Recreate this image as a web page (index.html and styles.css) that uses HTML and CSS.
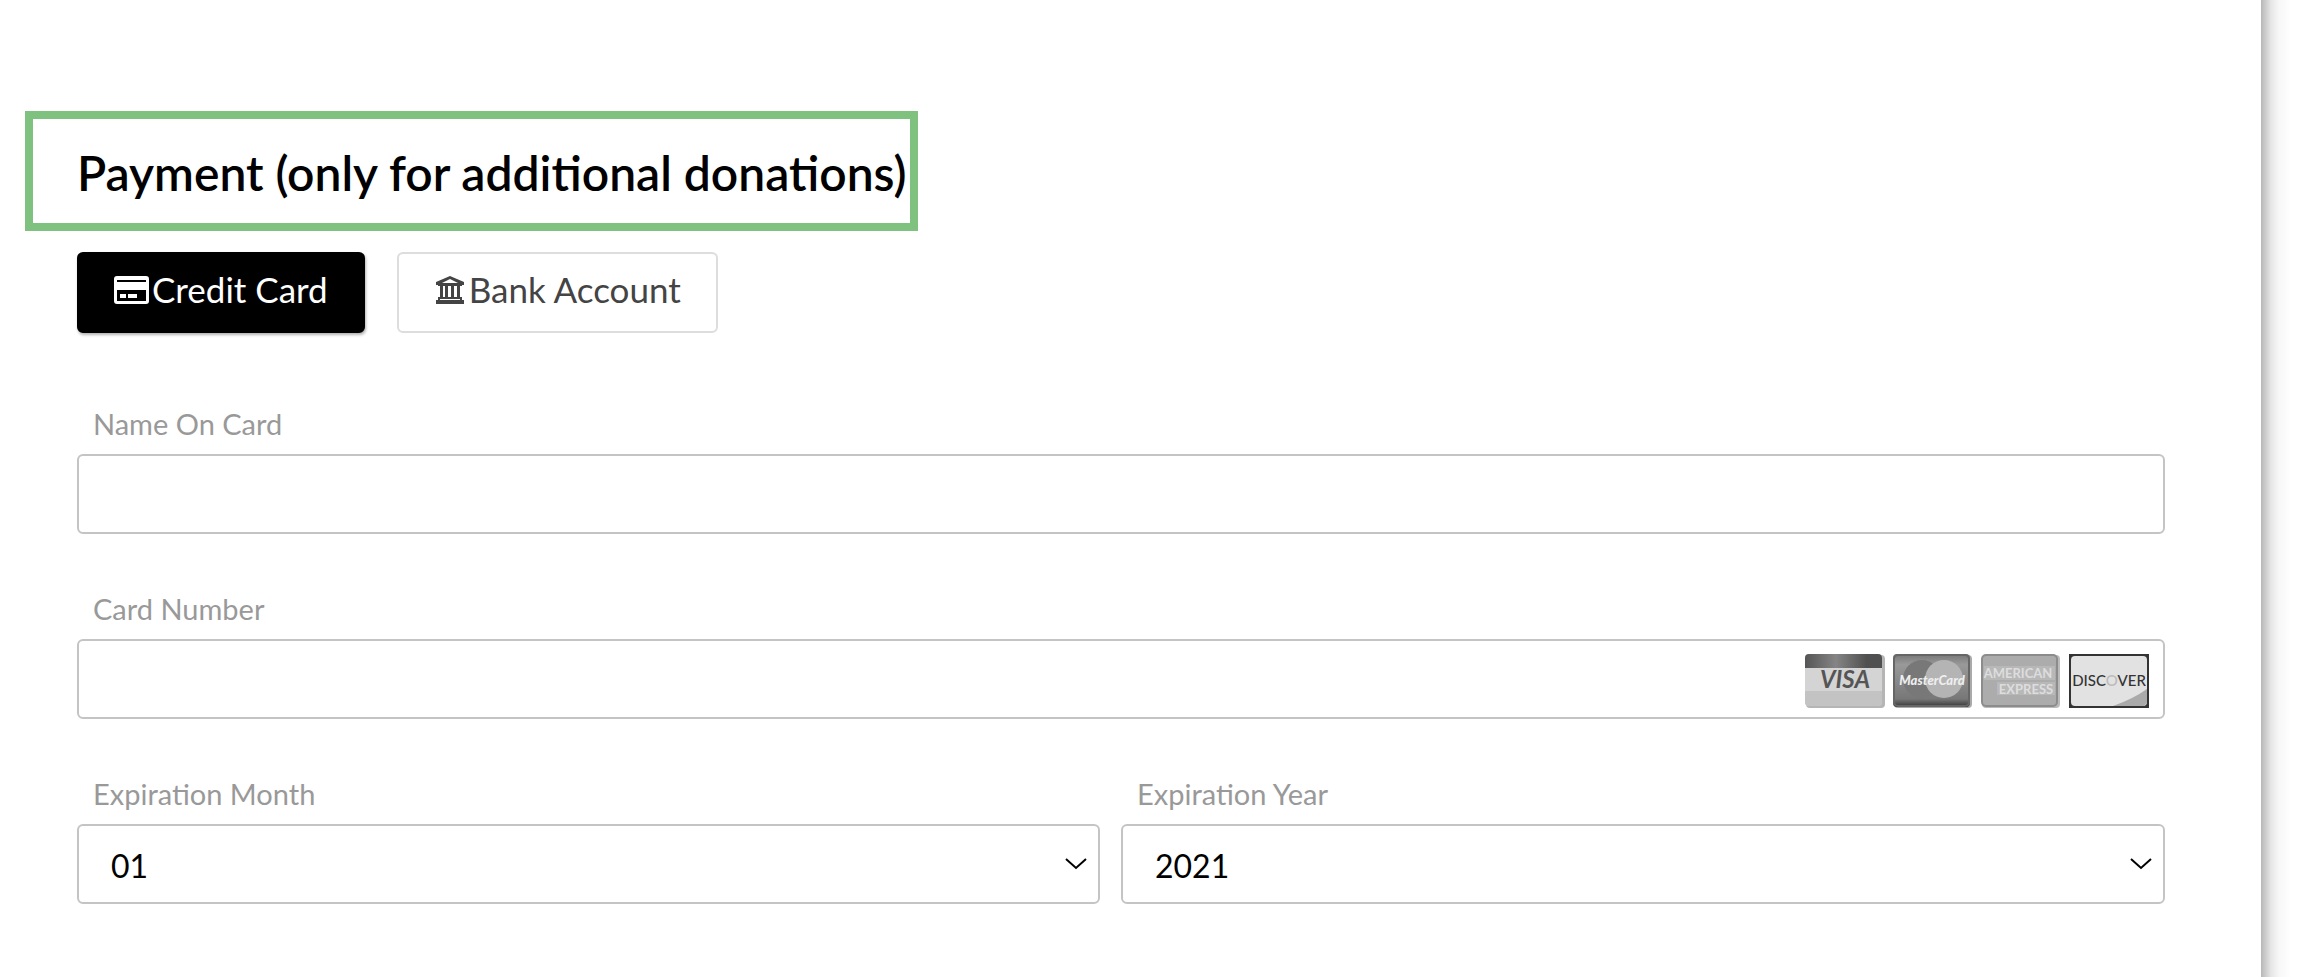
FILE: index.html
```
<!DOCTYPE html>
<html lang="en">
<head>
    <meta charset="UTF-8">
    <meta name="viewport" content="width=device-width, initial-scale=1.0">
    <title>Payment</title>
    <link rel="stylesheet" href="styles.css">
</head>
<body>
    <main class="page">
        <h2 class="title">Payment (only for additional donations)</h2>
        <form class="payment">
            <div class="methods">
                <button type="button" class="method active">
                    <svg class="card-icon" viewBox="0 0 35 28" aria-hidden="true">
                        <path fill-rule="evenodd" d="M3 0h29a3 3 0 0 1 3 3v22a3 3 0 0 1-3 3H3a3 3 0 0 1-3-3V3a3 3 0 0 1 3-3zM3 4v2h29V4zM3 14v11h29V14zM6 18h6v4H6zM14 18h9v4h-9z"/>
                    </svg>
                    <span>Credit Card</span>
                </button>
                <button type="button" class="method">
                    <svg class="bank-icon" viewBox="-2 0 32 28" aria-hidden="true">
                        <path fill-rule="evenodd" d="M14 0L28 6v3H26v1H2V9H0V6zM14 3L6 7h16zM4 10h3v11H4zM9 10h3v11H9zM15 10h3v11h-3zM21 10h3v11h-3zM2 21h24v3h2v4H0v-4h2zM4 23v1h20v-1z"/>
                    </svg>
                    <span>Bank Account</span>
                </button>
            </div>

            <div class="field">
                <label for="name">Name On Card</label>
                <input type="text" id="name">
            </div>

            <div class="field">
                <label for="number">Card Number</label>
                <div class="control">
                    <input type="text" id="number">
                    <div class="brands">
                        <svg viewBox="0 0 80 54">
                            <defs>
                                <linearGradient id="visaTop">
                                    <stop offset="0" stop-color="#555"/>
                                    <stop offset=".4" stop-color="#858585"/>
                                    <stop offset=".8" stop-color="#505050"/>
                                </linearGradient>
                                <linearGradient id="mcBack" x2="0" y2="1">
                                    <stop offset="0" stop-color="#777"/>
                                    <stop offset=".2" stop-color="#999"/>
                                    <stop offset=".85" stop-color="#777"/>
                                    <stop offset="1" stop-color="#333"/>
                                </linearGradient>
                            </defs>
                            <rect x="1" y="1" width="79" height="53" rx="4" fill="#b5b5b5"/>
                            <rect width="77" height="52" rx="4" fill="#d4d4d4"/>
                            <path d="M0 37h77v11a4 4 0 0 1-4 4H4a4 4 0 0 1-4-4z" fill="#c3c3c3"/>
                            <path d="M0 14V4a4 4 0 0 1 4-4h69a4 4 0 0 1 4 4v10z" fill="url(#visaTop)"/>
                            <text class="visa" x="40" y="34">VISA</text>
                        </svg>
                        <svg viewBox="0 0 80 54">
                            <rect x="1" y="1" width="78" height="53" rx="4" fill="#aaa"/>
                            <rect width="77" height="53" rx="4" fill="url(#mcBack)"/>
                            <rect x="1" y="1" width="75" height="51" rx="4" fill="none" stroke="#666" stroke-width="2"/>
                            <circle cx="29" cy="25" r="19" fill="#787878"/>
                            <circle cx="51" cy="25" r="19" fill="#b4b4b4"/>
                            <text class="mastercard" x="39" y="31">MasterCard</text>
                        </svg>
                        <svg viewBox="0 0 80 54">
                            <rect x="1" y="1" width="78" height="53" rx="4" fill="#bbb"/>
                            <rect x="1" y="1" width="75" height="51" rx="4" fill="#acacac" stroke="#8c8c8c" stroke-width="2"/>
                            <path d="M3 12h71v14H3zM16 28h58v13H16z" fill="#b8b8b8"/>
                            <text class="amex" x="37" y="24">AMERICAN</text>
                            <text class="amex" x="45" y="40">EXPRESS</text>
                        </svg>
                        <svg viewBox="0 0 80 54">
                            <rect width="80" height="54" fill="#333"/>
                            <rect x="2" y="2" width="76" height="50" rx="4" fill="#e2e2e2"/>
                            <path d="M44 52Q64 45 78 35v14l-3 3z" fill="#aaa"/>
                            <text class="discover" x="40" y="32">DISC<tspan fill="#bbb">O</tspan>VER</text>
                        </svg>
                    </div>
                </div>
            </div>

            <div class="row">
                <div class="field month">
                    <label for="month">Expiration Month</label>
                    <div class="control">
                        <select id="month">
                            <option>01</option>
                            <option>02</option>
                            <option>03</option>
                            <option>04</option>
                            <option>05</option>
                            <option>06</option>
                            <option>07</option>
                            <option>08</option>
                            <option>09</option>
                            <option>10</option>
                            <option>11</option>
                            <option>12</option>
                        </select>
                        <svg class="arrow" viewBox="0 0 22 12" aria-hidden="true"><path d="M1 1l10 9 10-9"/></svg>
                    </div>
                </div>
                <div class="field year">
                    <label for="year">Expiration Year</label>
                    <div class="control">
                        <select id="year">
                            <option>2021</option>
                            <option>2022</option>
                            <option>2023</option>
                            <option>2024</option>
                            <option>2025</option>
                        </select>
                        <svg class="arrow" viewBox="0 0 22 12" aria-hidden="true"><path d="M1 1l10 9 10-9"/></svg>
                    </div>
                </div>
            </div>
        </form>
    </main>
</body>
</html>
```
FILE: styles.css
```
* {
    margin: 0;
    padding: 0;
    box-sizing: border-box;
    font-family: Lato, sans-serif;
}

/* shadow strip down the right side of the page */
body {
    padding-right: 40px;
    background: linear-gradient(to right, #b8b8b8, #cacaca 4px, #e6e6e6 10px, #f7f7f7 18px, #fff 30px) no-repeat right / 40px 100%;
}

.page {
    min-height: 100vh;
    padding: 111px 96px 60px 25px;
    background: #fff;
}

.title {
    width: fit-content;
    padding: 24px 4px 20px 44px;
    border: 8px solid #7fc17f;
    font-size: 48px;
    font-weight: 600;
    line-height: 60px;
    color: #000;
}

.payment {
    padding-left: 52px;
}

.methods {
    display: flex;
    gap: 32px;
    margin: 21px 0 72px;
}

.method {
    display: flex;
    align-items: center;
    gap: 3px;
    padding: 14px 35px 20px;
    border: 2px solid #ddd;
    border-radius: 6px;
    background: #fff;
    color: #444;
    font-size: 35px;
    line-height: 43px;
    cursor: pointer;
}

.method.active {
    border-color: #000;
    background: #000;
    color: #fff;
    box-shadow: 1px 2px 3px rgba(0, 0, 0, 0.3);
}

.method svg {
    height: 28px;
    fill: currentColor;
}

.card-icon {
    width: 35px;
}

.bank-icon {
    width: 32px;
}

.field {
    margin-bottom: 56px;
}

label {
    display: block;
    margin: 0 0 12px 16px;
    font-size: 29px;
    line-height: 37px;
    color: #999;
}

.control {
    position: relative;
}

input,
select {
    display: block;
    width: 100%;
    height: 80px;
    padding: 2px 32px 0;
    border: 2px solid #c4c4c4;
    border-radius: 6px;
    background: #fff;
    color: #000;
    font-size: 32px;
    appearance: none;
}

/* card logos and arrows sit on top of the inputs */
.brands {
    position: absolute;
    top: 15px;
    right: 16px;
    display: flex;
    gap: 8px;
}

.brands svg {
    width: 80px;
    height: 54px;
}

.brands text {
    text-anchor: middle;
    font-weight: bold;
}

.brands .visa {
    font-size: 24px;
    font-style: italic;
    fill: #555;
}

.brands .mastercard {
    font-size: 13px;
    font-style: italic;
    font-weight: 900;
    fill: #eee;
}

.brands .amex {
    font-size: 13px;
    fill: #ddd;
}

.brands .discover {
    font-size: 15px;
    font-weight: 500;
    fill: #333;
}

.arrow {
    position: absolute;
    top: 34px;
    right: 13px;
    width: 22px;
    height: 12px;
    fill: none;
    stroke: #000;
    stroke-width: 2;
    pointer-events: none;
}

.row {
    display: flex;
    justify-content: space-between;
}

.row .field {
    margin-bottom: 0;
}

.month {
    width: 49%;
}

.year {
    width: 50%;
}
```
